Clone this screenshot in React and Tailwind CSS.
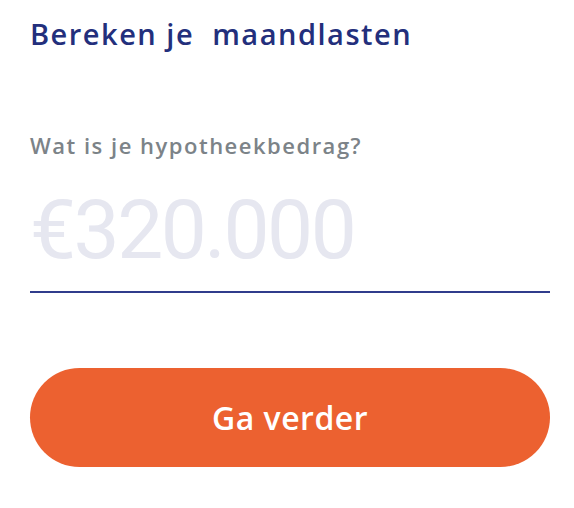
import React from "react";

export default function App() {
  return (
    <div className="w-[574px] h-[508px] bg-white px-[30px] pt-[12px]" style={{ fontFamily: "'Open Sans', Roboto, 'Liberation Sans', sans-serif" }}>
      <h1 className="text-[29px] leading-[44px] font-semibold text-[#232f7c] tracking-[1.5px] whitespace-pre">
        {"Bereken je  maandlasten"}
      </h1>
      <label className="block mt-[74px] text-[22px] leading-[30px] font-semibold text-[#7c8388] tracking-[1.5px]">
        Wat is je hypotheekbedrag?
      </label>
      <div className="mt-[25px] border-b-2 border-[#303c8c] w-[520px]" style={{ fontFamily: "Roboto, sans-serif" }}>
        <input
          className="w-full bg-transparent outline-none text-[82px] leading-[90px] pb-[16px] tracking-[-2.5px] text-[#e6e7f0] placeholder:text-[#e6e7f0]"
          placeholder="€320.000"
        />
      </div>
      <button className="mt-[75px] w-[520px] h-[99px] rounded-full bg-[#ec6130] text-white text-[32px] font-semibold tracking-[0.5px]">
        Ga verder
      </button>
    </div>
  );
}
